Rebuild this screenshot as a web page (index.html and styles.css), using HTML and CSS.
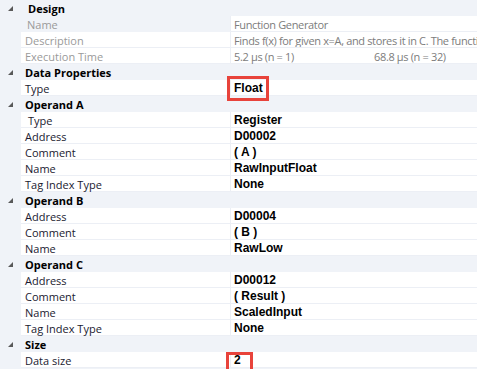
FILE: index.html
```html
<html>
    <head>
        <meta charset="utf-8">
        <title>Properties</title>
        <link rel="stylesheet" href="styles.css">
    </head>
    <body>
        <div id="grid">
            <div class="cat">
                <span class="gutter"><svg class="twisty" width="5" height="5" viewBox="0 0 5 5"><polygon points="5,0 5,5 0,5"/></svg></span>
                <span class="cat-name indent">Design</span>
            </div>
            <div class="prop muted">
                <span class="gutter"></span>
                <span class="label grey-cell indent2">Name</span>
                <span class="value">Function Generator</span>
            </div>
            <div class="prop muted">
                <span class="gutter"></span>
                <span class="label">Description</span>
                <span class="value clip">Finds f(x) for given x=A, and stores it in C. The functi</span>
            </div>
            <div class="prop muted">
                <span class="gutter"></span>
                <span class="label">Execution Time</span>
                <span class="value"><span class="time">5.2 µs (n = 1)</span>68.8 µs (n = 32)</span>
            </div>

            <div class="cat">
                <span class="gutter"><svg class="twisty" width="5" height="5" viewBox="0 0 5 5"><polygon points="5,0 5,5 0,5"/></svg></span>
                <span class="cat-name">Data Properties</span>
            </div>
            <div class="prop">
                <span class="gutter"></span>
                <span class="label">Type</span>
                <span class="value">Float<span class="mark mark-float"></span></span>
            </div>

            <div class="cat">
                <span class="gutter"><svg class="twisty" width="5" height="5" viewBox="0 0 5 5"><polygon points="5,0 5,5 0,5"/></svg></span>
                <span class="cat-name">Operand A</span>
            </div>
            <div class="prop">
                <span class="gutter"></span>
                <span class="label indent">Type</span>
                <span class="value">Register</span>
            </div>
            <div class="prop">
                <span class="gutter"></span>
                <span class="label">Address</span>
                <span class="value">D00002</span>
            </div>
            <div class="prop">
                <span class="gutter"></span>
                <span class="label">Comment</span>
                <span class="value">( A )</span>
            </div>
            <div class="prop">
                <span class="gutter"></span>
                <span class="label">Name</span>
                <span class="value">RawInputFloat</span>
            </div>
            <div class="prop">
                <span class="gutter"></span>
                <span class="label">Tag Index Type</span>
                <span class="value">None</span>
            </div>

            <div class="cat">
                <span class="gutter"><svg class="twisty" width="5" height="5" viewBox="0 0 5 5"><polygon points="5,0 5,5 0,5"/></svg></span>
                <span class="cat-name">Operand B</span>
            </div>
            <div class="prop">
                <span class="gutter"></span>
                <span class="label">Address</span>
                <span class="value">D00004</span>
            </div>
            <div class="prop">
                <span class="gutter"></span>
                <span class="label">Comment</span>
                <span class="value">( B )</span>
            </div>
            <div class="prop">
                <span class="gutter"></span>
                <span class="label">Name</span>
                <span class="value">RawLow</span>
            </div>

            <div class="cat">
                <span class="gutter"><svg class="twisty" width="5" height="5" viewBox="0 0 5 5"><polygon points="5,0 5,5 0,5"/></svg></span>
                <span class="cat-name">Operand C</span>
            </div>
            <div class="prop">
                <span class="gutter"></span>
                <span class="label">Address</span>
                <span class="value">D00012</span>
            </div>
            <div class="prop">
                <span class="gutter"></span>
                <span class="label">Comment</span>
                <span class="value">( Result )</span>
            </div>
            <div class="prop">
                <span class="gutter"></span>
                <span class="label">Name</span>
                <span class="value">ScaledInput</span>
            </div>
            <div class="prop">
                <span class="gutter"></span>
                <span class="label">Tag Index Type</span>
                <span class="value">None</span>
            </div>

            <div class="cat">
                <span class="gutter"><svg class="twisty" width="5" height="5" viewBox="0 0 5 5"><polygon points="5,0 5,5 0,5"/></svg></span>
                <span class="cat-name">Size</span>
            </div>
            <div class="prop">
                <span class="gutter"></span>
                <span class="label">Data size</span>
                <span class="value">2<span class="mark mark-size"></span></span>
            </div>
        </div>
    </body>
</html>
```

FILE: styles.css
```css
body {
    margin: 0;
    background-color: #f0f3f8;
    font-family: 'Open Sans', sans-serif;
    font-size: 11px;
    overflow: hidden;
}
#grid {
    width: 477px;
}
.cat,
.prop {
    display: flex;
    height: 16px;
    line-height: 15px;
}
.gutter {
    flex: none;
    width: 21px;
    position: relative;
}
.twisty {
    position: absolute;
    left: 8px;
    top: 6px;
    fill: #595959;
}
.cat-name {
    padding: 1px 0 0 4px;
    font-weight: 700;
    color: #000;
}
.label {
    flex: none;
    box-sizing: border-box;
    width: 210px;
    padding: 1px 0 0 4px;
    background-color: #fff;
    border-right: 1px solid #eceff5;
    border-bottom: 1px solid #eceff5;
    color: #1a1a30;
    white-space: nowrap;
}
.value {
    flex: 1;
    min-width: 0;
    position: relative;
    padding: 1px 0 0 3px;
    background-color: #fff;
    border-bottom: 1px solid #eceff5;
    font-family: 'Liberation Sans', sans-serif;
    font-size: 12px;
    font-weight: bold;
    color: #000;
    white-space: nowrap;
}
.clip {
    overflow: hidden;
}
.indent {
    padding-left: 7px;
}
.indent2 {
    padding-left: 6px;
}
.grey-cell {
    background-color: #f0f3f8;
    border-bottom-color: #f0f3f8;
}
.muted .label {
    color: #9a9a9a;
}
.muted .value {
    font-family: 'Open Sans', sans-serif;
    font-size: 11px;
    font-weight: normal;
    letter-spacing: -0.35px;
    color: #7c7c7c;
}
.time {
    display: inline-block;
    width: 140px;
}
.mark {
    position: absolute;
    box-sizing: border-box;
    border: 3px solid #e8433b;
}
.mark-float {
    left: -4px;
    top: -4px;
    width: 42px;
    height: 25px;
}
.mark-size {
    left: -5px;
    top: 0;
    width: 27px;
    height: 20px;
}
```
